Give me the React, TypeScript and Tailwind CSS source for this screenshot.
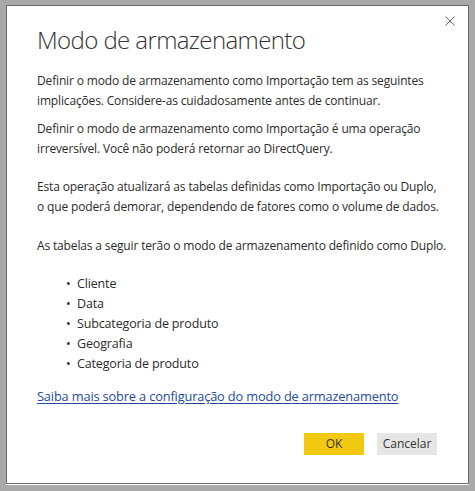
import React from "react";

const tables = [
  "Cliente",
  "Data",
  "Subcategoria de produto",
  "Geografia",
  "Categoria de produto",
];

export default function App() {
  return (
    <div className="w-[475px] h-[491px] bg-[#a9a9a9] pt-[5px] pl-[6px] font-['Open_Sans',sans-serif]">
      <div className="relative w-[463px] h-[479px] border border-[#6b6b6b] bg-white shadow-[0_1px_0_0_#ffffff]">
        <button className="absolute right-[12px] top-[9px] p-[1px] text-[#666]" aria-label="Fechar">
          <svg width="10" height="10" viewBox="0 0 10 10" fill="none" stroke="currentColor" strokeWidth="1">
            <path d="M0.5 0.5L9.5 9.5M9.5 0.5L0.5 9.5" />
          </svg>
        </button>

        <div className="pl-[30px] pr-[20px] pt-[18px]">
          <h1 className="text-[24px] leading-[32px] font-light text-[#333] tracking-[-0.6px]">
            Modo de armazenamento
          </h1>

          <div className="mt-[15px] text-[12px] leading-[20px] text-[#2b2b2b] tracking-[-0.15px] whitespace-nowrap">
            <p>
              Definir o modo de armazenamento como Importação tem as seguintes
              <br />
              implicações. Considere-as cuidadosamente antes de continuar.
            </p>
            <p className="mt-[8px]">
              Definir o modo de armazenamento como Importação é uma operação
              <br />
              irreversível. Você não poderá retornar ao DirectQuery.
            </p>
            <p className="mt-[18px]">
              Esta operação atualizará as tabelas definidas como Importação ou Duplo,
              <br />
              o que poderá demorar, dependendo de fatores como o volume de dados.
            </p>
            <p className="mt-[19px]">
              As tabelas a seguir terão o modo de armazenamento definido como Duplo.
            </p>
            <ul className="mt-[18px] pl-[29px] text-[12.5px]">
              {tables.map((t) => (
                <li key={t} className="flex">
                  <span className="w-[11px]">•</span>
                  <span>{t}</span>
                </li>
              ))}
            </ul>
            <a href="#" className="block mt-[12px] text-[12.8px] text-[#1e4b9b] underline underline-offset-2">
              Saiba mais sobre a configuração do modo de armazenamento
            </a>
          </div>
        </div>

        <div className="absolute right-[31px] bottom-[28px] flex gap-[13px] text-[12px] text-[#333]">
          <button className="w-[60px] h-[22px] bg-[#f2c811]">OK</button>
          <button className="w-[60px] h-[22px] bg-[#e6e6e6]">Cancelar</button>
        </div>
      </div>
    </div>
  );
}
